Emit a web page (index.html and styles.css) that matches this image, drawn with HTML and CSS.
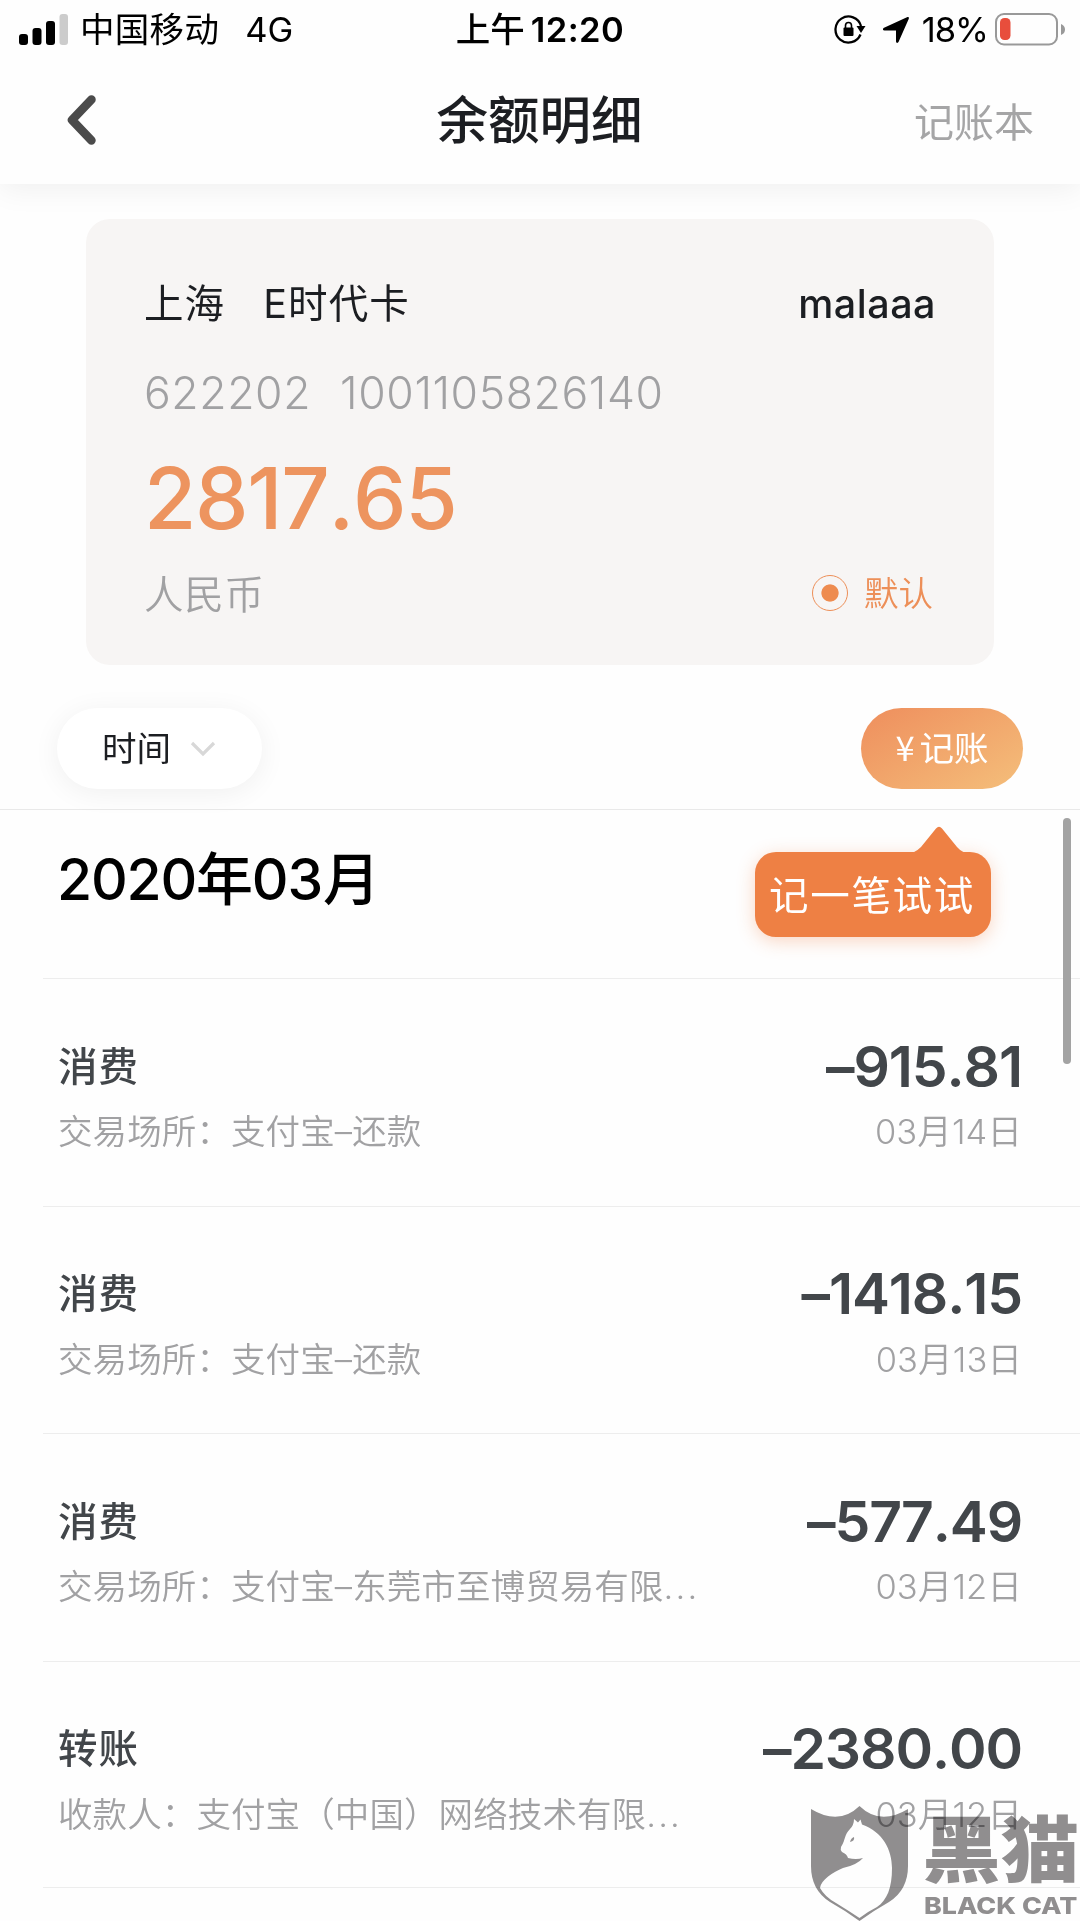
FILE: index.html
```html
<!DOCTYPE html>
<html lang="zh-CN">
<head>
    <meta charset="UTF-8">
    <meta name="viewport" content="width=device-width, initial-scale=1.0">
    <title>余额明细</title>
    <link rel="stylesheet" href="styles.css">
</head>
<body>
    <div class="status-bar">
        <div class="status-left">
            <svg class="signal" width="49" height="32" viewBox="0 0 49 32">
                <rect x="0" y="20" width="9" height="11" rx="3"/>
                <rect x="13.5" y="14" width="9" height="17" rx="3"/>
                <rect x="27" y="7" width="9" height="24" rx="3"/>
                <rect x="40.5" y="0" width="8.5" height="31" rx="3" fill="#ccc"/>
            </svg>
            <span class="carrier">中国移动</span>
            <span class="network">4G</span>
        </div>
        <div class="status-time"><span>上午</span><span class="clock">12:20</span></div>
        <div class="status-right">
            <svg class="lock" width="32" height="32" viewBox="0 0 32 32">
                <path d="M26.5 20.5A13 13 0 1 1 27 12" fill="none" stroke="#000" stroke-width="2.3"/>
                <path d="M22.5 12h9l-4.5 7z"/>
                <rect x="9.5" y="13.5" width="10" height="8.5" rx="1"/>
                <path d="M11.5 14v-2.5a3 3 0 0 1 6 0v2.5" fill="none" stroke="#000" stroke-width="1.6"/>
            </svg>
            <svg class="arrow" width="28" height="28" viewBox="0 0 28 28">
                <path d="M25.5 1Q27.5 .5 26.8 2.8L16.5 26Q14.5 28 14 25.5V14.5H2.5Q0 14 1.5 12z"/>
            </svg>
            <span class="percent">18%</span>
            <svg class="battery" width="71" height="34" viewBox="0 0 71 34">
                <rect x="1" y="1" width="61" height="30.5" rx="8" fill="none" stroke="#999" stroke-width="2"/>
                <rect x="5" y="5" width="10.5" height="22" rx="4.5" fill="#e84e3c"/>
                <path d="M66 11q4 1.5 4 5.5t-4 5.5z" fill="#999"/>
            </svg>
        </div>
    </div>

    <div class="header">
        <svg class="back" width="34" height="54" viewBox="0 0 34 54">
            <path d="M27.5 6.5L8 27L27.5 47.5" fill="none" stroke="#4b4b4b" stroke-width="8.5" stroke-linecap="round" stroke-linejoin="round"/>
        </svg>
        <h1>余额明细</h1>
        <span class="book">记账本</span>
    </div>

    <div class="card">
        <div class="card-row">
            <div class="card-name"><span>上海</span><span>E时代卡</span></div>
            <span class="alias">malaaa</span>
        </div>
        <div class="card-number"><span>622202</span><span>1001105826140</span></div>
        <div class="balance">2817.65</div>
        <div class="card-row card-bottom">
            <span class="currency">人民币</span>
            <div class="default"><span class="radio"></span><span>默认</span></div>
        </div>
    </div>

    <div class="toolbar">
        <div class="filter">
            <span>时间</span>
            <svg width="26" height="16" viewBox="0 0 26 16">
                <path d="M2 2l11 11L24 2" fill="none" stroke="#d8d8d8" stroke-width="3.2"/>
            </svg>
        </div>
        <div class="record"><span class="yen">¥</span><span>记账</span></div>
    </div>

    <div class="month">
        <h2>2020年03<span class="unit">月</span></h2>
        <div class="tooltip">
            <svg class="tooltip-arrow" width="64" height="28" viewBox="0 0 64 28">
                <path d="M0 28Q8 27 14 21L29 2.5Q32 -1 35 2.5L50 21Q55 27 64 28z"/>
            </svg>
            记一笔试试
        </div>
    </div>

    <div class="list">
        <div class="item">
            <div class="line"><span class="type">消费</span><span class="amount">–915.81</span></div>
            <div class="line info"><span>交易场所：支付宝–还款</span><span class="date">03月14日</span></div>
        </div>
        <div class="item">
            <div class="line"><span class="type">消费</span><span class="amount">–1418.15</span></div>
            <div class="line info"><span>交易场所：支付宝–还款</span><span class="date">03月13日</span></div>
        </div>
        <div class="item">
            <div class="line"><span class="type">消费</span><span class="amount">–577.49</span></div>
            <div class="line info"><span>交易场所：支付宝–东莞市至博贸易有限<span class="dots">...</span></span><span class="date">03月12日</span></div>
        </div>
        <div class="item">
            <div class="line"><span class="type">转账</span><span class="amount">–2380.00</span></div>
            <div class="line info"><span>收款人：支付宝（中国）网络技术有限<span class="dots">...</span></span><span class="date">03月12日</span></div>
        </div>
    </div>

    <div class="scrollbar"></div>

    <div class="watermark">
        <svg width="97" height="115" viewBox="0 0 97 115">
            <path fill="#918f90" d="M0 3Q28 20 48.5 0Q69 20 97 3V60Q97 84 78 96Q62 105 48.5 115Q35 105 19 96Q0 84 0 60z"/>
            <path fill="#fff" d="M43 13l4 3.5l2.5-3l1.5 5C72 26 81 44 81 62C81 82 76 94 66 101Q56 106 48.5 112Q38 105 25 97Q14 91 9 82C10 74 22 66 32 62Q46 59 52 52Q45 54 37 52Q36 48 31 46Q29 44 30 41C35 33 33 29 39 23Q43 19 43 13z"/>
            <path fill="#918f90" d="M39 36q1-4 4-5q1 4-4 5z"/>
        </svg>
        <div class="watermark-text">
            <span class="wm-cn">黑猫</span>
            <span class="wm-en">BLACK CAT</span>
        </div>
    </div>
</body>
</html>
```
FILE: styles.css
```css
* {
    box-sizing: border-box;
}

body {
    font-family: Inter, "Noto Sans CJK SC", sans-serif;
    background: #fefefe;
    color: #1c1e22;
    margin: 0;
    width: 1080px;
    height: 1921px;
    overflow: hidden;
    position: relative;
    white-space: nowrap;
}

h1, h2 {
    margin: 0;
    font-weight: 500;
}

.status-bar {
    display: grid;
    grid-template-columns: 1fr auto 1fr;
    align-items: center;
    position: relative;
    z-index: 1;
    height: 60px;
    padding: 0 14px 0 19px;
    background: #fefefe;
    color: #000;
    font-size: 34.5px;
    line-height: 60px;
}

.status-left, .status-right, .status-time {
    display: flex;
    align-items: center;
}

.status-right {
    justify-content: flex-end;
}

.signal {
    margin-right: 12px;
}

.carrier {
    letter-spacing: 0.3px;
}

.network {
    margin-left: 26px;
}

.status-time {
    font-weight: 500;
    margin-left: -5px;
}

.clock {
    font-weight: 600;
    margin-left: 6px;
    letter-spacing: 0.4px;
}

.arrow {
    margin: 0 12px 0 16px;
}

.percent {
    letter-spacing: -1px;
    margin-right: 7px;
}

.header {
    display: grid;
    grid-template-columns: 1fr auto 1fr;
    align-items: center;
    height: 124px;
    padding: 0 46px 4px 64px;
    box-shadow: 0 6px 28px rgba(0, 0, 0, 0.06);
}

h1 {
    font-size: 51.5px;
    line-height: 60px;
    margin-left: -19px;
}

.book {
    justify-self: end;
    font-size: 40px;
    color: #a5a5a6;
}

.card {
    width: 908px;
    height: 446px;
    margin: 35px 0 0 86px;
    padding: 56px 58px 0 58px;
    border-radius: 24px;
    background: #f7f5f4;
}

.card-row {
    display: flex;
    justify-content: space-between;
    align-items: center;
    height: 58px;
    font-size: 39.5px;
}

.card-name {
    display: flex;
    gap: 38px;
    margin-top: -7px;
    letter-spacing: 1.1px;
}

.alias {
    font-weight: 500;
    letter-spacing: 0.5px;
}

.card-number {
    display: flex;
    gap: 29px;
    margin-top: 31px;
    font-size: 44.5px;
    line-height: 58px;
    font-weight: 350;
    letter-spacing: 0.6px;
    color: #a1a1a3;
}

.balance {
    margin-top: 27px;
    font-size: 85px;
    line-height: 100px;
    font-weight: 500;
    font-kerning: none;
    letter-spacing: -1.3px;
    color: #ed945f;
}

.card-bottom {
    margin-top: 13px;
}

.currency {
    font-weight: 350;
    letter-spacing: 0.8px;
    color: #a1a1a3;
}

.default {
    display: flex;
    align-items: center;
    gap: 16px;
    padding-right: 3px;
    font-size: 34.5px;
    font-weight: 350;
    color: #ed8f58;
}

.radio {
    width: 36px;
    height: 36px;
    margin-top: 3px;
    border: 1.5px solid #ed8f58;
    border-radius: 50%;
    background: radial-gradient(circle, #ee8c50 8.2px, transparent 9px);
}

.toolbar {
    display: flex;
    justify-content: space-between;
    align-items: flex-start;
    height: 145px;
    padding: 43px 57px 0 57px;
    border-bottom: 1px solid #e9e9e9;
}

.filter, .record {
    display: flex;
    align-items: center;
    height: 81px;
    border-radius: 41px;
    font-size: 34.5px;
}

.filter span, .record span {
    margin-top: -5px;
}

.filter {
    width: 205px;
    padding-left: 45px;
    gap: 19px;
    background: #fff;
    box-shadow: 0 4px 28px rgba(0, 0, 0, 0.06);
}

.record {
    width: 162px;
    justify-content: center;
    gap: 5px;
    color: #fff;
    background: linear-gradient(150deg, #ef9360 10%, #f4bc79 95%);
}

.yen {
    font-family: "Noto Sans CJK SC", sans-serif;
    width: 19px;
}

.month {
    display: flex;
    justify-content: space-between;
    height: 168px;
    padding: 42px 89px 0 57px;
}

h2 {
    font-size: 57px;
    line-height: 58px;
    margin-top: -1px;
    letter-spacing: -1.2px;
    color: #000;
}

.unit {
    margin-left: 1px;
}

.tooltip {
    position: relative;
    width: 236px;
    height: 85px;
    padding-left: 14px;
    border-radius: 21px;
    background: #ee8044;
    color: #fff;
    font-size: 39.5px;
    line-height: 88px;
    letter-spacing: 1.7px;
    box-shadow: 0 4px 18px rgba(238, 128, 68, 0.32);
}

.tooltip-arrow {
    position: absolute;
    left: 152px;
    top: -26px;
    fill: #ee8044;
}

.item {
    height: 227.5px;
    margin-left: 43px;
    padding: 52px 58px 0 15px;
    border-top: 1px solid #ededed;
}

.item:last-child {
    border-bottom: 1px solid #ededed;
}

.line {
    display: flex;
    justify-content: space-between;
    align-items: center;
    height: 64px;
    color: #42464a;
}

.type {
    font-size: 39.5px;
    font-weight: 500;
    letter-spacing: 1px;
}

.amount {
    margin-top: 6px;
    font-size: 57px;
    font-weight: 600;
    font-kerning: none;
    letter-spacing: -1.1px;
}

.info {
    height: 68px;
    font-size: 34.5px;
    font-weight: 350;
    letter-spacing: 0.1px;
    color: #a1a1a3;
}

.dots {
    letter-spacing: 2.2px;
}

.scrollbar {
    position: absolute;
    left: 1063px;
    top: 818px;
    width: 8px;
    height: 246px;
    border-radius: 4px;
    background: #a3a3a3;
}

/* logo stamped over the bottom right corner */
.watermark {
    position: absolute;
    left: 811px;
    top: 1806px;
    display: flex;
    gap: 16px;
    mix-blend-mode: multiply;
    color: #918f90;
}

.watermark-text {
    display: flex;
    flex-direction: column;
    padding-top: 9px;
}

.wm-cn {
    font-size: 72px;
    line-height: 70px;
    font-weight: 900;
    transform: scaleX(1.09);
    transform-origin: 20px 0;
}

.wm-en {
    margin-top: 9px;
    font-size: 23.5px;
    line-height: 24px;
    font-weight: 800;
    transform: scaleX(1.14);
    transform-origin: left;
}
```
